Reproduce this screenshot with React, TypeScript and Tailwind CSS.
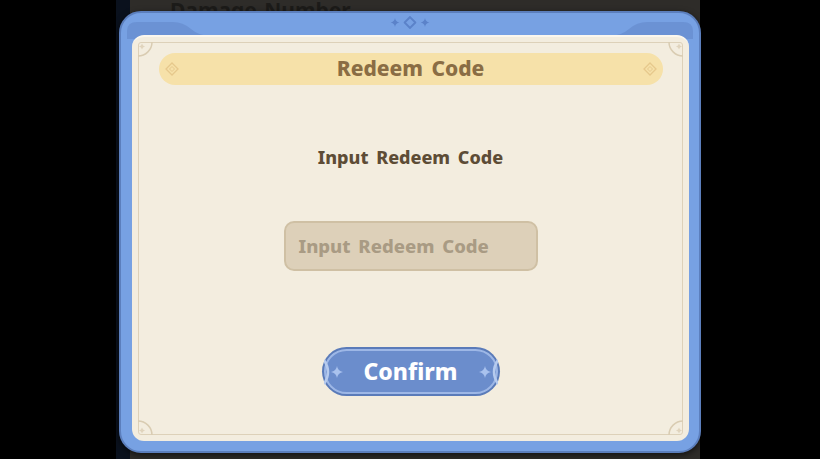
import React from 'react';

const font = { fontFamily: '"Noto Sans", "Open Sans", sans-serif' };

// four-point sparkle used on the header strip and the button ends
function Sparkle({ size = 8, color = '#5b82c9' }: { size?: number; color?: string }) {
  return (
    <svg width={size} height={size} viewBox="0 0 10 10">
      <path d="M5 0 Q5.6 4.4 10 5 Q5.6 5.6 5 10 Q4.4 5.6 0 5 Q4.4 4.4 5 0Z" fill={color} />
    </svg>
  );
}

function HollowDiamond({ size = 12, color = '#5b82c9' }: { size?: number; color?: string }) {
  return (
    <svg width={size} height={size} viewBox="0 0 12 12">
      <path d="M6 1 L11 6 L6 11 L1 6Z" fill="none" stroke={color} strokeWidth="1.8" />
    </svg>
  );
}

// little ornament at both ends of the title ribbon
function RibbonGem() {
  return (
    <svg width="14" height="14" viewBox="0 0 14 14">
      <path d="M7 1 L13 7 L7 13 L1 7Z" fill="none" stroke="#e6c88c" strokeWidth="1.3" />
      <path d="M7 4.5 L9.5 7 L7 9.5 L4.5 7Z" fill="none" stroke="#e6c88c" strokeWidth="1" />
    </svg>
  );
}

// concave corner notch of the inner frame line
function FrameCorner({ className }: { className: string }) {
  return (
    <svg className={className} width="16" height="16" viewBox="0 0 16 16">
      <path d="M0 14 A14 14 0 0 0 14 0" fill="none" stroke="#d9ccb2" strokeWidth="1.5" />
      <path d="M4 1.5 L5 3.5 L7 4.5 L5 5.5 L4 7.5 L3 5.5 L1 4.5 L3 3.5Z" fill="#e0d4bd" />
    </svg>
  );
}

function ButtonEnd({ flip }: { flip?: boolean }) {
  return (
    <svg
      width="22"
      height="30"
      viewBox="0 0 22 30"
      className={flip ? 'absolute right-[-2px] top-1/2 -translate-y-1/2 scale-x-[-1]' : 'absolute left-[-2px] top-1/2 -translate-y-1/2'}
    >
      <path d="M0 3 Q8 15 0 27" fill="none" stroke="#b6cbee" strokeWidth="2.5" />
      <path d="M13 9 Q13.8 14.2 19 15 Q13.8 15.8 13 21 Q12.2 15.8 7 15 Q12.2 14.2 13 9Z" fill="#a9c2ee" />
    </svg>
  );
}

export default function App() {
  return (
    <div className="relative w-[820px] h-[459px] bg-black overflow-hidden" style={font}>
      {/* settings page underneath */}
      <div className="absolute left-[116px] top-0 bottom-0 w-[16px] bg-[#0a111d]" />
      <div className="absolute left-[130px] right-[120px] top-0 bottom-0 bg-[#2e2c29]">
        <div className="pl-[40px] -mt-[3px] text-[21px] leading-[26px] font-bold text-[#1c1b19] [word-spacing:2px]">Damage Number</div>
      </div>

      {/* dialog */}
      <div className="absolute left-[119px] top-[11px] w-[582px] h-[442px] rounded-[22px] bg-[#77a1e3] border-2 border-[#5c7fbd] shadow-[0_2px_6px_rgba(0,0,0,0.6)] pt-[22px] pl-[11px] pr-[10px] pb-[10px] flex flex-col">
        {/* header ears */}
        <svg className="absolute left-0 top-[6px]" width="90" height="20" viewBox="0 0 90 20">
          <path d="M6 20 L6 12 Q6 3 16 3 L52 3 Q62 3 70 10 Q78 17 90 17 L90 20Z" fill="#6b92d4" />
        </svg>
        <svg className="absolute right-0 top-[6px] scale-x-[-1]" width="90" height="20" viewBox="0 0 90 20">
          <path d="M6 20 L6 12 Q6 3 16 3 L52 3 Q62 3 70 10 Q78 17 90 17 L90 20Z" fill="#6b92d4" />
        </svg>
        <div className="absolute left-1/2 top-[3px] -translate-x-1/2 flex items-center gap-[4px]">
          <Sparkle size={9} />
          <HollowDiamond size={13} />
          <Sparkle size={9} />
        </div>

        <div className="relative flex-1 rounded-[12px] bg-[#f3eddf] border-t-2 border-[#fbf7ee] flex flex-col items-center">
          {/* inner frame line */}
          <div className="absolute left-[6px] right-[6px] top-[5px] bottom-[6px] border-[1.5px] border-[#ddd1b9] rounded-[3px]" />
          <FrameCorner className="absolute left-[6px] top-[5px]" />
          <FrameCorner className="absolute right-[6px] top-[5px] scale-x-[-1]" />
          <FrameCorner className="absolute left-[6px] bottom-[6px] scale-y-[-1]" />
          <FrameCorner className="absolute right-[6px] bottom-[6px] scale-[-1]" />

          {/* title ribbon */}
          <div className="relative mt-[16px] w-[504px] h-[32px] rounded-full bg-[#f6e1a9] flex items-center justify-between px-[6px]">
            <RibbonGem />
            <span className="text-[21px] font-extrabold text-[#8a6d44] [word-spacing:3px]">Redeem Code</span>
            <RibbonGem />
          </div>

          <div className="mt-[59px] text-[18px] font-extrabold text-[#5d4c36] [word-spacing:3px]">Input Redeem Code</div>

          <div className="mt-[50px] w-[254px] h-[50px] rounded-[10px] bg-[#ddd0b9] border-2 border-[#cfc0a4] flex items-center px-[13px]">
            <span className="text-[18.5px] font-extrabold text-[#a99b84] [word-spacing:3px]">Input Redeem Code</span>
          </div>

          <div className="mt-[76px] w-[178px] h-[49px] rounded-full bg-[#5a7bb9] p-[2px]">
            <div className="relative w-full h-full rounded-full bg-[#6b8dcc] border-2 border-[#9db7e6] flex items-center justify-center">
              <ButtonEnd />
              <ButtonEnd flip />
              <span className="text-[23px] font-extrabold text-white -mt-[1px]">Confirm</span>
            </div>
          </div>
        </div>
      </div>
    </div>
  );
}
